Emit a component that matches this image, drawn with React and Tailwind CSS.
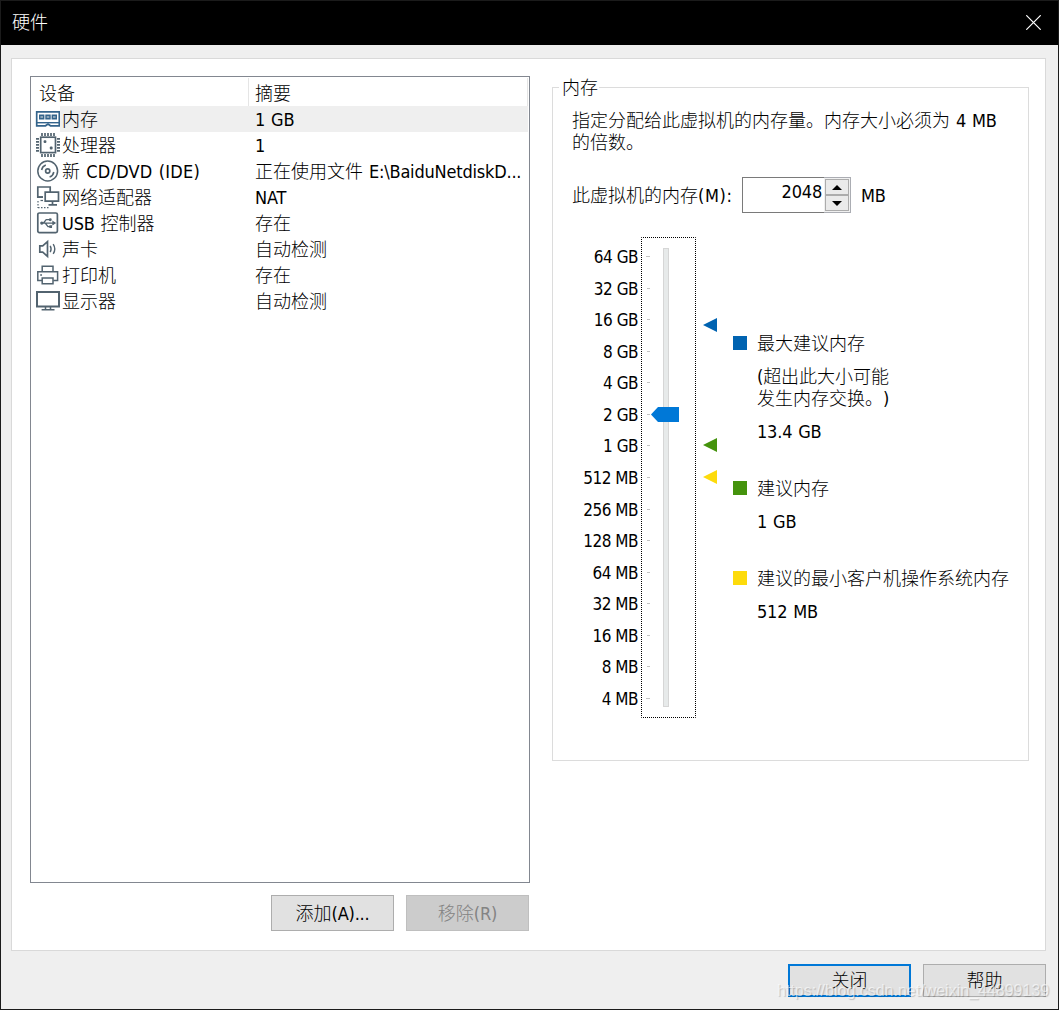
import React from "react";

// Splits mixed text so Latin runs get the heavier UI face and their own tracking.
function T({ children, run = "tracking-[-0.2px] [word-spacing:1px]" }) {
  const parts = String(children).split(/([\x20-\x7e]+)/);
  return parts.map((part, i) =>
    i % 2 ? (
      <span key={i} className={"font-normal " + run}>{part}</span>
    ) : (
      part
    )
  );
}

const Svg = ({ children }) => (
  <svg width="26" height="26" viewBox="0 0 26 26" fill="none" stroke="#52636f" strokeWidth="1.7" className="shrink-0">
    {children}
  </svg>
);

const icons = {
  memory: (
    <Svg>
      <path d="M1.7 5.8H24.3V19.8H15.5L13 18L10.5 19.8H1.7Z" fill="#fff" stroke="#34648c" />
      <path d="M1.7 16.7H24.3" stroke="#34648c" strokeWidth="1.4" />
      <g fill="#8fa6b8" stroke="#34648c" strokeWidth="1.4">
        <path d="M4.7 9.2h4v3.6h-4z M11 9.2h4v3.6h-4z M17.3 9.2h4v3.6h-4z" />
      </g>
    </Svg>
  ),
  cpu: (
    <Svg>
      <rect x="5.7" y="5.2" width="14.8" height="15.4" />
      <path d="M7 1V4M10 1V4M13 1V4M16 1V4M19 1V4M7 22V25M10 22V25M13 22V25M16 22V25M19 22V25" />
      <path d="M1 6.8H4M1 9.8H4M1 12.8H4M1 15.8H4M1 18.8H4M22 6.8H25M22 9.8H25M22 12.8H25M22 15.8H25M22 18.8H25" />
      <rect x="8.6" y="8.3" width="2.8" height="2.8" rx="1" fill="#52636f" stroke="none" />
      <rect x="14.8" y="14.6" width="2.8" height="2.8" rx="1" fill="#52636f" stroke="none" />
    </Svg>
  ),
  disc: (
    <Svg>
      <circle cx="12.7" cy="13" r="9.9" strokeWidth="1.5" />
      <circle cx="12.7" cy="13" r="2.1" />
      <path d="M6.6 12A6.5 6.5 0 0 1 10.8 7M18.8 14A6.5 6.5 0 0 1 14.6 19" strokeWidth="1.5" />
    </Svg>
  ),
  network: (
    <Svg>
      <path d="M8 13.2H2.8V3H15.2V8" />
      <path d="M10.2 8.2H23.5V17.2H10.2Z" />
      <path d="M13.5 20.8H22M17.5 17V21M3 13.2H8" />
      <path d="M3 17V24M3 23.6H15" strokeDasharray="1.5 1.5" strokeWidth="1.2" />
      <path d="M5.5 16.5H8" strokeWidth="1.2" />
    </Svg>
  ),
  usb: (
    <Svg>
      <rect x="2.8" y="3" width="19.6" height="19.6" rx="1.6" />
      <g strokeWidth="1.3">
        <path d="M6 13.1H18M8.5 13L11.2 9.7H14.5M10.2 13L13 16.7H15" />
        <circle cx="6.8" cy="13.1" r="1" fill="#52636f" />
        <circle cx="15.3" cy="9.7" r=".8" fill="#52636f" />
        <path d="M18 11.8L20 13.1L18 14.4ZM15 16H16.4V17.4H15Z" fill="#52636f" />
      </g>
    </Svg>
  ),
  sound: (
    <Svg>
      <path d="M4.8 9.8H7.7L12.5 5.7V20.3L7.7 16.2H4.8Z" />
      <path d="M15.2 9.8Q17 13 15.2 16.2M18.2 8.1Q21.4 13 18.2 17.9" strokeWidth="1.4" />
    </Svg>
  ),
  printer: (
    <Svg>
      <path d="M7.2 9V4.2H18V9M7 18.6H2.8V9.8H22.6V18.6H18.3" strokeWidth="1.5" />
      <path d="M7.2 16H18V21.8H7.2ZM5.2 12.9H7" strokeWidth="1.5" />
    </Svg>
  ),
  display: (
    <Svg>
      <path d="M2 4H24V18.4H2Z" strokeWidth="2" />
      <path d="M10.5 18.5V21.8H15.5V18.5M6.6 21.7H19.5" strokeWidth="1.5" />
    </Svg>
  ),
};

const devices = [
  ["memory", "内存", "1 GB"],
  ["cpu", "处理器", "1"],
  ["disc", "新 CD/DVD (IDE)", "正在使用文件 E:\\BaiduNetdiskD...", "tracking-[0.2px] [word-spacing:1px]"],
  ["network", "网络适配器", "NAT"],
  ["usb", "USB 控制器", "存在"],
  ["sound", "声卡", "自动检测"],
  ["printer", "打印机", "存在"],
  ["display", "显示器", "自动检测"],
];

const scale = ["64 GB", "32 GB", "16 GB", "8 GB", "4 GB", "2 GB", "1 GB", "512 MB", "256 MB", "128 MB", "64 MB", "32 MB", "16 MB", "8 MB", "4 MB"];

const Arrow = ({ className }) => (
  <svg width="14" height="14" viewBox="0 0 14 14" className={"absolute left-0 " + className}>
    <path d="M0 7L14 0V14Z" fill="currentColor" />
  </svg>
);

function DeviceList() {
  return (
    <div className="h-[807px] w-[500px] border border-[#828790] bg-white">
      <div className="flex h-[29px] pt-px pr-px">
        <div className="w-[218px] border-r border-[#e5e5e5] pl-2 leading-[31px]">设备</div>
        <div className="flex-1 border-r border-[#e5e5e5] pl-[6px] leading-[31px]">摘要</div>
      </div>
      {devices.map(([icon, name, summary, run], i) => (
        <div key={name} className="flex h-[26px] pr-px pl-1 leading-[28px] whitespace-nowrap">
          {icons[icon]}
          <div className={i === 0 ? "-ml-px flex flex-1 bg-[#efefef]" : "-ml-px flex flex-1"}>
            <div className="w-[195px] pl-[2px]"><T run={run}>{name}</T></div>
            <div><T>{summary}</T></div>
          </div>
        </div>
      ))}
    </div>
  );
}

function Spinner() {
  return (
    <div className="flex h-9 w-[109px] border border-[#7a7a7a] bg-white">
      <div className="flex-1 pr-[2px] text-right leading-[27px]"><T>2048</T></div>
      <div className="-my-px -mr-px flex w-[27px] flex-col border border-l-0 border-[#abadb3] bg-[#f0f0f0] p-px">
        {["M5 0L10 5H0Z", "M0 0H10L5 5Z"].map((d) => (
          <div key={d} className="flex flex-1 items-center justify-center border border-[#acacac] bg-[#eaeaea]">
            <svg width="10" height="5" viewBox="0 0 10 5"><path d={d} /></svg>
          </div>
        ))}
      </div>
    </div>
  );
}

function MemorySlider() {
  return (
    <div className="flex">
      <div className="mt-1 w-[66px] text-right text-[17px]">
        {scale.map((s) => (
          <div key={s} className="h-[31.57px] leading-[32px] whitespace-nowrap"><T run="tracking-[-0.5px]">{s}</T></div>
        ))}
      </div>
      <div className="relative ml-[3px] h-[481px] w-[55px]">
        <svg width="55" height="481" viewBox="0 0 55 481" className="block">
          <rect x=".5" y=".5" width="54" height="480" fill="none" stroke="#000" strokeDasharray="1 1" strokeDashoffset=".5" />
          <rect x="22.5" y="11.5" width="5" height="458" fill="#e7eaea" stroke="#d6d6d6" />
          {scale.map((s, i) => (
            <rect key={s} x={i === 0 || i === 14 ? 5 : 6} y={Math.round(19 + i * 31.57)} width={i === 0 || i === 14 ? 4 : 3} height="1" fill="#c4c4c4" />
          ))}
          <path d="M10 177.5L17 170H38V185H17Z" fill="#0078d7" />
        </svg>
      </div>
      <div className="relative ml-[7px] w-[14px]">
        <Arrow className="top-[81px] text-[#0063b1]" />
        <Arrow className="top-[201px] text-[#45930d]" />
        <Arrow className="top-[233px] text-[#fddb0c]" />
      </div>
      <div className="ml-4 flex flex-col pt-[96px] whitespace-nowrap">
        <Hint swatch="bg-[#0063b1]" title="最大建议内存" value="13.4 GB">
          <div className="mt-[11px]"><T>(超出此大小可能</T><br /><T>发生内存交换。)</T></div>
        </Hint>
        <div className="mt-[35px]"><Hint swatch="bg-[#45930d]" title="建议内存" value="1 GB" /></div>
        <div className="mt-[35px]"><Hint swatch="bg-[#fddb0c]" title="建议的最小客户机操作系统内存" value="512 MB" /></div>
      </div>
    </div>
  );
}

function Hint({ swatch, title, value, children }) {
  return (
    <div className="flex leading-[22px]">
      <div className={"mt-[3px] mr-[10px] size-[14px] shrink-0 " + swatch} />
      <div>
        <div>{title}</div>
        {children}
        <div className="mt-[11px]"><T>{value}</T></div>
      </div>
    </div>
  );
}

function Button({ className, children }) {
  return (
    <button className={"flex items-center justify-center font-light " + className}>
      <span><T>{children}</T></span>
    </button>
  );
}

export default function App() {
  return (
    <div className="relative flex h-[1010px] w-[1059px] flex-col overflow-hidden border border-[#1b1b1b] bg-[#efefef] text-[18px] font-light text-black [font-family:'DejaVu_Sans_Condensed','DejaVu_Sans','Noto_Sans_CJK_SC',sans-serif] [text-spacing-trim:space-all]">
      <header className="flex h-11 shrink-0 items-center justify-between bg-black pr-[17px] pb-px pl-[11px] text-white">
        <span>硬件</span>
        <svg width="15" height="15" viewBox="0 0 15 15" stroke="#fff" strokeWidth="1.2"><path d="M.3 .3L14.7 14.7M14.7 .3L.3 14.7" /></svg>
      </header>
      <main className="mt-[13px] ml-[10px] flex h-[893px] w-[1035px] shrink-0 border border-[#d9d9d9] bg-white pt-[17px] pl-[18px]">
        <section>
          <DeviceList />
          <div className="mt-3 flex justify-end gap-3 pr-px">
            <Button className="h-9 w-[123px] border border-[#adadad] bg-[#e1e1e1]">添加(A)...</Button>
            <Button className="h-9 w-[123px] border border-[#bfbfbf] bg-[#cccccc] text-[#838383]">移除(R)</Button>
          </div>
        </section>
        <section className="mt-[11px] ml-[22px] h-[674px] w-[477px] border border-[#dcdcdc] pl-[19px]">
          <div className="-mt-3 -ml-[13px] h-6 w-10 bg-white pl-[3px] leading-6">内存</div>
          <p className="mt-[10px] leading-[22px] whitespace-nowrap">
            <T>指定分配给此虚拟机的内存量。内存大小必须为 4 MB</T><br />的倍数。
          </p>
          <div className="mt-[23px] flex h-9">
            <div className="w-[170px] leading-[37px] whitespace-nowrap"><T run="tracking-[0.6px]">此虚拟机的内存(M):</T></div>
            <Spinner />
            <div className="ml-[10px] leading-[37px]"><T>MB</T></div>
          </div>
          <div className="mt-6"><MemorySlider /></div>
        </section>
      </main>
      <footer className="mt-[13px] mr-3 flex justify-end gap-3">
        <Button className="h-[33px] w-[123px] border-2 border-[#0078d7] bg-[#e1e1e1]">关闭</Button>
        <Button className="h-[33px] w-[123px] border border-[#adadad] bg-[#e1e1e1]">帮助</Button>
      </footer>
      <div className="absolute top-[979px] left-[776px] text-[16px] leading-[22px] font-normal whitespace-nowrap text-white/60 [font-family:'Liberation_Sans',sans-serif] [text-shadow:1px_1px_1px_rgba(0,0,0,0.2)]">
        https://blog.csdn.net/weixin_44899139
      </div>
    </div>
  );
}
